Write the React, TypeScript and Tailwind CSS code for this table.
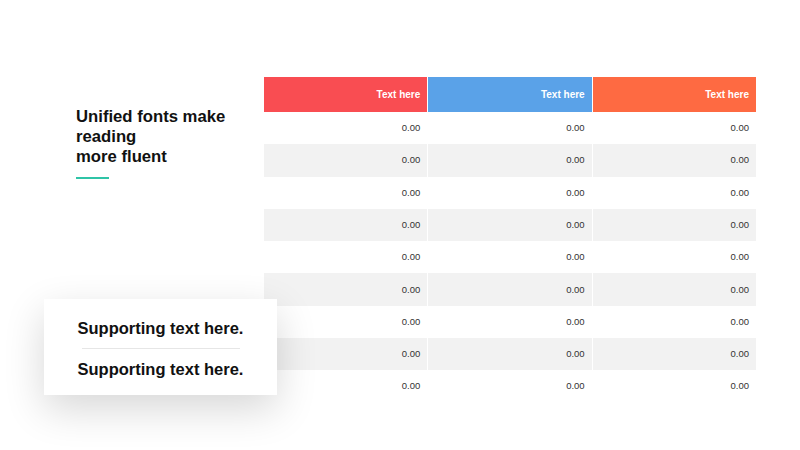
import React from 'react';

const headers = [
  { label: 'Text here', bg: 'bg-[#f94d52]' },
  { label: 'Text here', bg: 'bg-[#5aa2e8]' },
  { label: 'Text here', bg: 'bg-[#fe6a42]' },
];

const rows = Array.from({ length: 9 }, () => ['0.00', '0.00', '0.00']);

export default function App() {
  return (
    <div className="relative w-[800px] h-[450px] bg-white overflow-hidden" style={{ fontFamily: '"Liberation Sans", Arial, sans-serif' }}>
      <div className="flex pt-[77px] pl-[76px]">
        {/* left title */}
        <div className="w-[188px] shrink-0">
          <h1 className="mt-[30px] text-[16.7px] leading-[20px] font-bold text-[#111]">
            Unified fonts make
            <br />
            reading
            <br />
            more fluent
          </h1>
          <div className="mt-[10px] w-[33px] h-[2px] bg-[#2fc4a7]" />
        </div>

        {/* table */}
        <div className="w-[492px]">
          <div className="grid grid-cols-3 gap-px h-[35px] bg-white">
            {headers.map((h, i) => (
              <div key={i} className={`${h.bg} flex items-center justify-end pr-[7px] text-white text-[10px] font-bold`}>
                {h.label}
              </div>
            ))}
          </div>
          <div>
            {rows.map((r, i) => (
              <div key={i} className="grid grid-cols-3 gap-px h-[32.3px]">
                {r.map((v, j) => (
                  <div
                    key={j}
                    className={`${i % 2 === 1 ? 'bg-[#f2f2f2]' : 'bg-white'} flex items-center justify-end pr-[7px] text-[9.5px] text-[#333]`}
                  >
                    {v}
                  </div>
                ))}
              </div>
            ))}
          </div>
        </div>
      </div>

      {/* floating card */}
      <div className="absolute left-[44px] top-[299px] w-[233px] h-[96px] pt-[2px] bg-white shadow-[0_14px_40px_rgba(0,0,0,0.16)] flex flex-col items-center justify-center">
        <div className="text-[16.5px] font-bold text-[#111] leading-[20px]">Supporting text here.</div>
        <div className="w-[158px] h-px bg-[#e6e6e6] my-[10px]" />
        <div className="text-[16.5px] font-bold text-[#111] leading-[20px]">Supporting text here.</div>
      </div>
    </div>
  );
}
